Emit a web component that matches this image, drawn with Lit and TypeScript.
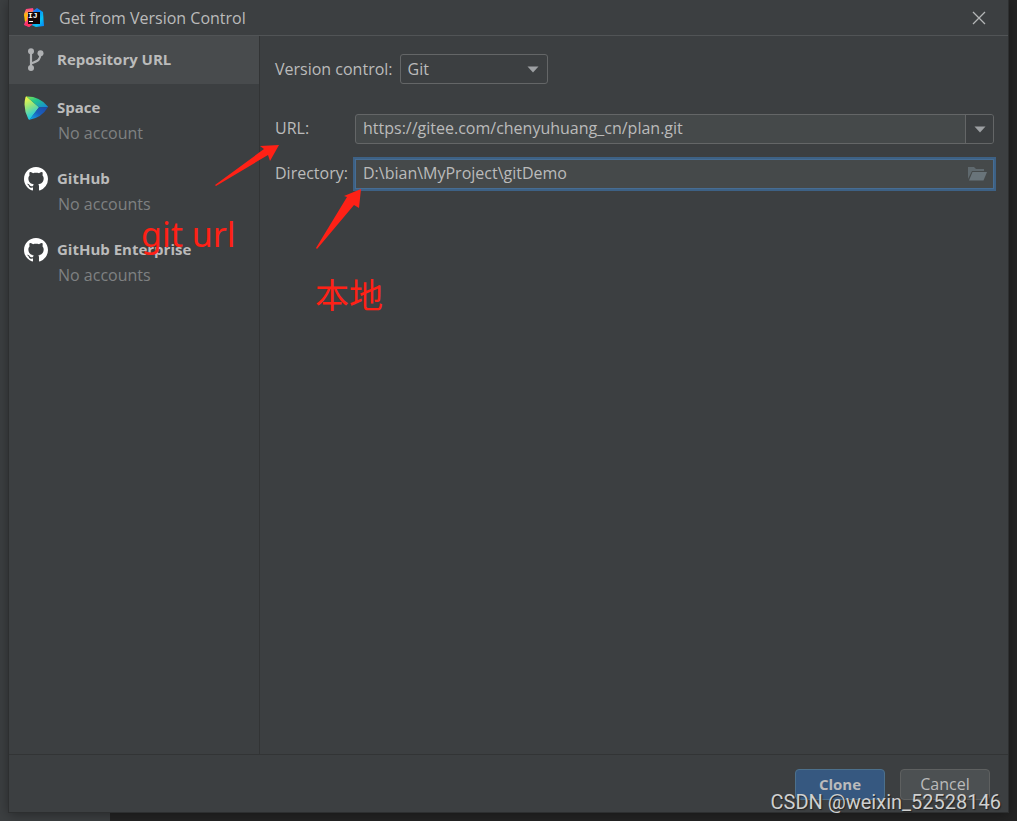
import { LitElement, html, svg, css, nothing } from "lit";
import { customElement, state } from "lit/decorators.js";
import { classMap } from "lit/directives/class-map.js";

interface Source {
  id: string;
  title: string;
  status?: string;
  icon: unknown;
}

const branchIcon = svg`<svg viewBox="0 0 24 24" width="24" height="24" aria-hidden="true">
  <g fill="none" stroke="#afb1b3" stroke-width="2.200">
    <path d="M7 3V20M16.500 5C16.500 11 15 13 7 15.500"/>
  </g>
  <g fill="#afb1b3"><circle cx="7" cy="3.200" r="3"/><circle cx="7" cy="20" r="3"/><circle cx="16.500" cy="5.200" r="3"/></g>
</svg>`;

const spaceIcon = svg`<svg viewBox="0 0 24 24" width="24" height="24" aria-hidden="true">
  <defs>
    <linearGradient id="sp-a" x1="0" y1="0" x2=".35" y2="1"><stop offset=".05" stop-color="#f7f545"/><stop offset=".5" stop-color="#8fe37f"/><stop offset="1" stop-color="#12c8ee"/></linearGradient>
    <linearGradient id="sp-b" x1="0" y1="0" x2="1" y2="1"><stop offset="0" stop-color="#8be34b"/><stop offset=".4" stop-color="#23c78c"/><stop offset="1" stop-color="#1585dc"/></linearGradient>
    <linearGradient id="sp-c" x1="1" y1="0" x2="0" y2="1"><stop offset="0" stop-color="#1d4bab"/><stop offset=".5" stop-color="#1a5fbd"/><stop offset="1" stop-color="#10b0ee"/></linearGradient>
  </defs>
  <path fill="url(#sp-a)" d="M2.6.6Q1.8.2 1.5 1.2Q-1.4 12 4.2 22.8Q4.8 24 5.8 23.6L15 11.2Z"/>
  <path fill="url(#sp-b)" d="M2.2.5Q15 0 23.6 10.2Q24 10.7 23.8 11.2H15Z"/>
  <path fill="url(#sp-c)" d="M15 11.2H23.8Q18 21.500 5.4 23.700Z"/>
</svg>`;

const githubIcon = svg`<svg viewBox="0 0 16 16" width="24" height="24" aria-hidden="true">
  <path fill="#fff" d="M8 0C3.58 0 0 3.58 0 8c0 3.54 2.29 6.53 5.47 7.59.4.07.55-.17.55-.38 0-.19-.01-.82-.01-1.49-2.01.37-2.53-.49-2.69-.94-.09-.23-.48-.94-.82-1.13-.28-.15-.68-.52-.01-.53.63-.01 1.08.58 1.23.82.72 1.21 1.87.87 2.33.66.07-.52.28-.87.51-1.07-1.78-.2-3.64-.89-3.64-3.95 0-.87.31-1.59.82-2.15-.08-.2-.36-1.02.08-2.12 0 0 .67-.21 2.2.82.64-.18 1.32-.27 2-.27s1.36.09 2 .27c1.53-1.04 2.2-.82 2.2-.82.44 1.1.16 1.92.08 2.12.51.56.82 1.27.82 2.15 0 3.07-1.87 3.75-3.65 3.95.29.25.54.73.54 1.48 0 1.07-.01 1.93-.01 2.2 0 .21.15.46.55.38A8.01 8.01 0 0 0 16 8c0-4.42-3.58-8-8-8z"/>
</svg>`;

const ideaIcon = svg`<svg viewBox="0 0 20 20" width="20" height="20" aria-hidden="true">
  <defs>
    <linearGradient id="ij-l" x1="0" y1="0" x2="0" y2="1"><stop offset="0" stop-color="#ff318c"/><stop offset=".35" stop-color="#fdb33a"/><stop offset=".6" stop-color="#fe4a6a"/><stop offset="1" stop-color="#e8309a"/></linearGradient>
    <linearGradient id="ij-r" x1="0" y1="0" x2="1" y2="1"><stop offset="0" stop-color="#9075e0"/><stop offset=".35" stop-color="#087cfa"/><stop offset=".7" stop-color="#07c3f2"/><stop offset="1" stop-color="#087cfa"/></linearGradient>
  </defs>
  <path fill="url(#ij-l)" d="M2 1L9 0L11 8L9 16L5 19L0 17L2 11L0 6Z"/>
  <path fill="#fdb60d" d="M0 7L3 4V12L1 14Z"/>
  <path fill="url(#ij-r)" d="M9 3L13 0L19 4L20 18L12 19L5 16Z"/>
  <path fill="#fe315d" d="M1 17L4 13L9 16L5 19Z"/>
  <rect x="4" y="4" width="12" height="12" fill="#120608"/>
  <rect x="5" y="13" width="4" height="1" fill="#fff"/>
  <text x="4" y="10" class="ij">IJ</text>
</svg>`;

const folderIcon = svg`<svg viewBox="0 0 20 16" width="20" height="16" aria-hidden="true">
  <path fill="#5f696e" d="M1 13V1H7L9 3H17V5H5Z"/><path fill="#69747a" d="M5.500 6H20L16.500 14.500H2Z"/>
</svg>`;

const arrowDown = svg`<svg class="caret" viewBox="0 0 12 7" width="12" height="7" aria-hidden="true"><path fill="#9da0a3" d="M.5.5H11.500L6 6.500Z"/></svg>`;

const sources: Source[] = [
  { id: "url", title: "Repository URL", icon: branchIcon },
  { id: "space", title: "Space", status: "No account", icon: spaceIcon },
  { id: "github", title: "GitHub", status: "No accounts", icon: githubIcon },
  { id: "ghe", title: "GitHub Enterprise", status: "No accounts", icon: githubIcon },
];

@customElement("app-root")
export class AppRoot extends LitElement {
  @state() private selected = "url";

  static styles = css`
    * { box-sizing: border-box; }
    :host {
      display: flex;
      position: relative;
      box-sizing: border-box;
      min-height: 100vh;
      padding: 0 9px 9px;
      overflow: hidden;
      background: linear-gradient(to right, #3c3f41 110px, #242424 110px);
      color: #bbbbbb;
      font: 16px/24px "Open Sans", "Noto Sans", "Noto Sans CJK SC", sans-serif;
    }
    button, input, select { font: inherit; color: inherit; margin: 0; }
    .dialog {
      flex: 1;
      min-width: 0;
      display: flex;
      flex-direction: column;
      background: #3c3f41;
      box-shadow: 0 0 0 1px #2d2f30, 0 2px 12px rgba(0, 0, 0, 0.4);
    }
    .titlebar {
      display: flex;
      align-items: center;
      gap: 15px;
      height: 36px;
      padding: 0 22px 0 15px;
      border-bottom: 1px solid #515456;
    }
    .titlebar h1 { flex: 1; margin: 0; font-size: 16px; font-weight: 400; }
    .titlebar svg, .item svg { display: block; }
    .ij { font: 700 8px "Liberation Mono", monospace; fill: #fff; }
    .close { display: flex; padding: 0; border: 0; background: none; }
    .body { flex: 1; display: flex; min-height: 0; }
    .sidebar { width: 251px; flex: none; border-right: 1px solid #323435; }
    .item {
      display: grid;
      grid-template-columns: 24px 1fr;
      column-gap: 9px;
      width: 100%;
      padding: 12px 15px;
      border: 0;
      background: none;
      text-align: left;
    }
    .item.account { padding-bottom: 9px; }
    .item.selected { background: #484b4d; }
    .name { font-size: 15px; font-weight: 700; line-height: 22px; }
    .status { grid-column: 2; padding-left: 1px; line-height: 26px; color: #7f8182; }
    .form { flex: 1; min-width: 0; padding: 18px 14px 18px 15px; }
    .row { display: flex; align-items: center; gap: 7px; margin-bottom: 30px; }
    .picker, .combo, .path { position: relative; display: flex; height: 30px; border: 1px solid #646667; border-radius: 3px; }
    .picker { width: 148px; }
    .picker select { width: 100%; padding: 0 7px; border: 0; background: none; appearance: none; outline: 0; }
    .picker .caret { position: absolute; right: 8px; top: 11px; pointer-events: none; }
    .fields { display: grid; grid-template-columns: 73px minmax(0, 1fr); gap: 15px 7px; align-items: center; }
    .fields label { padding-bottom: 2px; white-space: nowrap; }
    .combo, .path { background: #45494a; }
    .combo input, .path input { flex: 1; min-width: 0; padding: 0 7px 2px; border: 0; background: none; outline: 0; }
    .combo button { display: flex; align-items: center; justify-content: center; width: 28px; padding: 0; border: 0; border-left: 1px solid #646667; border-radius: 0 2px 2px 0; background: #3c3f41; }
    .path { border-color: #466d94; border-radius: 0; box-shadow: 0 0 0 2px #3d6185; }
    .path button { display: flex; align-items: center; padding: 0 6px; border: 0; background: none; }
    .footer { display: flex; justify-content: flex-end; gap: 15px; padding: 14px 18px 12px; border-top: 1px solid #323435; }
    .action { width: 90px; height: 31px; padding: 0 0 2px; border: 1px solid #5e6060; border-radius: 4px; background: #4c5052; }
    .action.primary { border-color: #4c708c; background: #365880; font-size: 15px; font-weight: 700; }
    .marks { position: absolute; left: 0; top: 0; pointer-events: none; }
    .note { position: absolute; color: #ff2116; font: 34px/44px "Noto Sans", "Noto Sans CJK SC", sans-serif; white-space: nowrap; pointer-events: none; }
    .note-url { left: 141px; top: 212px; }
    .note-local { left: 315px; top: 272px; font-family: "Noto Sans CJK SC", sans-serif; }
    .watermark { position: absolute; right: 16px; bottom: 7px; color: #cfd0d0; font: 20px/24px Roboto, sans-serif; text-shadow: 1px 1px 1px #222; white-space: nowrap; pointer-events: none; }
  `;

  private renderSource(s: Source) {
    return html`<button
      class=${classMap({ item: true, account: !!s.status, selected: this.selected === s.id })}
      @click=${() => (this.selected = s.id)}
    >
      ${s.icon}<span class="name">${s.title}</span>
      ${s.status ? html`<span class="status">${s.status}</span>` : nothing}
    </button>`;
  }

  render() {
    return html`
      <main class="dialog">
        <header class="titlebar">
          ${ideaIcon}
          <h1>Get from Version Control</h1>
          <button class="close" aria-label="Close">
            <svg viewBox="0 0 14 14" width="14" height="14"><path d="M1 1L13 13M13 1L1 13" stroke="#b4b6b7" stroke-width="1.300"/></svg>
          </button>
        </header>
        <div class="body">
          <nav class="sidebar">${sources.map((s) => this.renderSource(s))}</nav>
          <section class="form">
            <div class="row">
              <label for="vcs">Version control:</label>
              <div class="picker"><select id="vcs"><option>Git</option></select>${arrowDown}</div>
            </div>
            <div class="fields">
              <label for="url">URL:</label>
              <div class="combo">
                <input id="url" type="text" value="https://gitee.com/chenyuhuang_cn/plan.git" spellcheck="false" />
                <button aria-label="Recent URLs">${arrowDown}</button>
              </div>
              <label for="dir">Directory:</label>
              <div class="path">
                <input id="dir" type="text" value="D:\\bian\\MyProject\\gitDemo" spellcheck="false" />
                <button aria-label="Browse">${folderIcon}</button>
              </div>
            </div>
          </section>
        </div>
        <footer class="footer">
          <button class="action primary">Clone</button>
          <button class="action">Cancel</button>
        </footer>
      </main>
      <svg class="marks" width="400" height="260" viewBox="0 0 400 260" aria-hidden="true">
        <g fill="#ff2116">
          <path d="M215 185L264 149L260 146L279 145L270 161L268 155L216 186Z"/>
          <path d="M316 248L347 197L344 196L361 189L359 208L354 205L317 249Z"/>
        </g>
      </svg>
      <span class="note note-url">git url</span>
      <span class="note note-local">本地</span>
      <span class="watermark">CSDN @weixin_52528146</span>
    `;
  }
}
